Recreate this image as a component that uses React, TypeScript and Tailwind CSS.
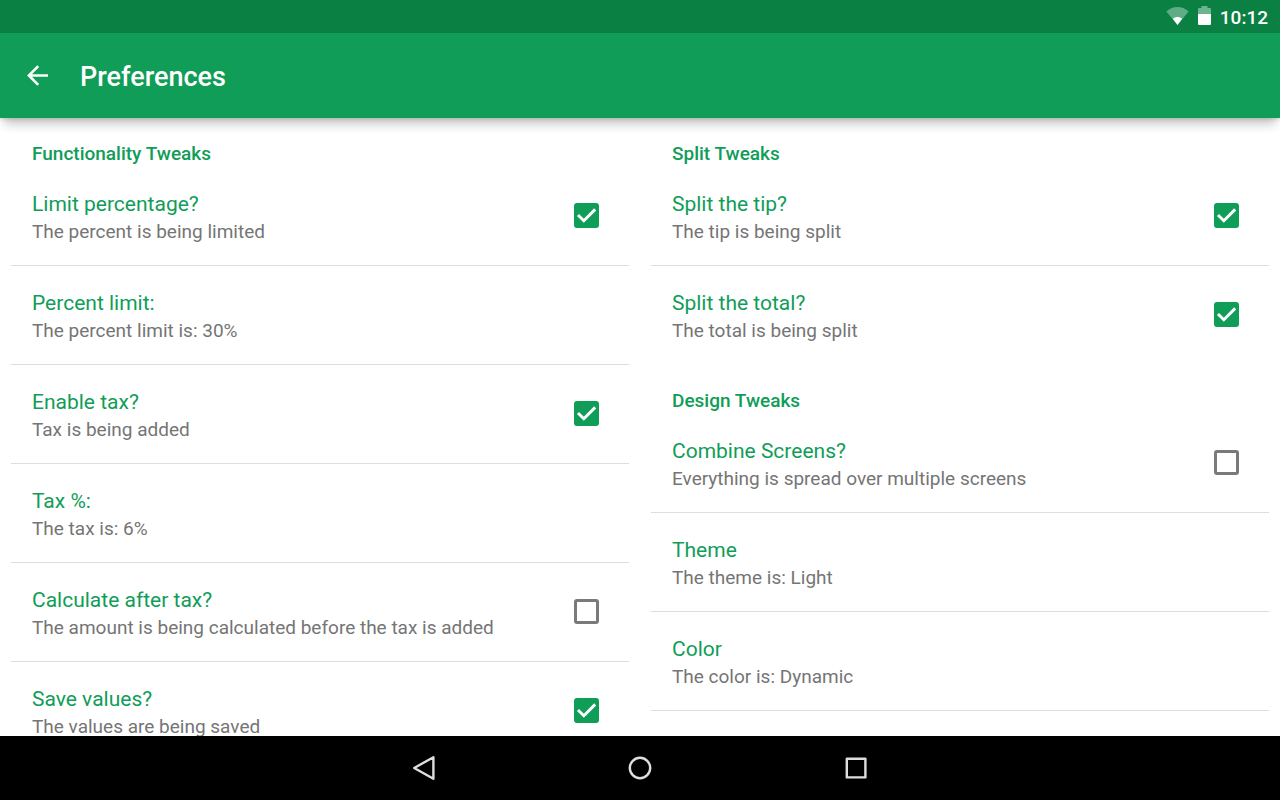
import { useState } from "react";

type Item = { title: string; summary: string; checked?: boolean };
type Section = { heading: string; items: Item[] };

const functionality: Section[] = [
  {
    heading: "Functionality Tweaks",
    items: [
      { title: "Limit percentage?", summary: "The percent is being limited", checked: true },
      { title: "Percent limit:", summary: "The percent limit is: 30%" },
      { title: "Enable tax?", summary: "Tax is being added", checked: true },
      { title: "Tax %:", summary: "The tax is: 6%" },
      {
        title: "Calculate after tax?",
        summary: "The amount is being calculated before the tax is added",
        checked: false,
      },
      { title: "Save values?", summary: "The values are being saved", checked: true },
    ],
  },
];

const appearance: Section[] = [
  {
    heading: "Split Tweaks",
    items: [
      { title: "Split the tip?", summary: "The tip is being split", checked: true },
      { title: "Split the total?", summary: "The total is being split", checked: true },
    ],
  },
  {
    heading: "Design Tweaks",
    items: [
      {
        title: "Combine Screens?",
        summary: "Everything is spread over multiple screens",
        checked: false,
      },
      { title: "Theme", summary: "The theme is: Light" },
      { title: "Color", summary: "The color is: Dynamic" },
    ],
  },
];

function ItemText({ title, summary }: { title: string; summary: string }) {
  return (
    <span className="flex min-w-0 flex-1 flex-col pt-[5px] text-left">
      <span className="truncate text-[21px] leading-7 text-[#0f9d58]">{title}</span>
      <span className="truncate text-[19px] leading-7 text-[#757575]">{summary}</span>
    </span>
  );
}

function CheckRow({ title, summary, initial }: { title: string; summary: string; initial: boolean }) {
  const [on, setOn] = useState(initial);
  return (
    <label className="flex w-full cursor-pointer items-center pt-[18px] pr-[30px] pb-[19px] pl-[21px]">
      <ItemText title={title} summary={summary} />
      <span className="grid size-[25px] shrink-0 place-items-center">
        <input
          type="checkbox"
          checked={on}
          onChange={(e) => setOn(e.target.checked)}
          className="col-start-1 row-start-1 size-[25px] appearance-none rounded-[3px] border-[3px] border-[#7a7a7a] checked:border-[#0f9d58] checked:bg-[#0f9d58]"
        />
        {on && (
          <svg viewBox="0 0 25 25" className="pointer-events-none col-start-1 row-start-1 size-[25px]" aria-hidden="true">
            <path d="M4 12 L9.8 17.7 L21.2 6.4" fill="none" stroke="#fff" strokeWidth="2.9" />
          </svg>
        )}
      </span>
    </label>
  );
}

function Column({ sections }: { sections: Section[] }) {
  return (
    <div className="min-h-0 overflow-y-auto px-[11px] [scrollbar-width:none]">
      {sections.map((section) => (
        <section key={section.heading}>
          <h2 className="px-[21px] pt-[22px] text-[19px] leading-[27px] font-medium text-[#0f9d58]">
            {section.heading}
          </h2>
          <ul>
            {section.items.map((item, i) => (
              <li
                key={item.title}
                className={
                  i === section.items.length - 1 && section !== sections[sections.length - 1]
                    ? "border-b border-transparent"
                    : "border-b border-[#dedede]"
                }
              >
                {item.checked === undefined ? (
                  <button type="button" className="flex w-full items-center px-[21px] pt-[18px] pb-[19px]">
                    <ItemText title={item.title} summary={item.summary} />
                  </button>
                ) : (
                  <CheckRow title={item.title} summary={item.summary} initial={item.checked} />
                )}
              </li>
            ))}
          </ul>
        </section>
      ))}
    </div>
  );
}

export default function App() {
  return (
    <div className="flex h-screen flex-col bg-white font-['Roboto',sans-serif]">
      <div className="relative z-20 flex h-[33px] shrink-0 items-start justify-end bg-[#0b8043] pt-[6px] pr-3 text-white">
        <svg viewBox="0 0 24 20" className="mr-2 h-5 w-6" aria-label="Wi-Fi">
          <path d="M0.4 5.4 C7 -0.5 16 -0.5 22.6 5.4 L11.5 19 Z" fill="#fff" fillOpacity="0.35" />
          <path d="M6.8 12.8 C9.6 10.4 13.4 10.4 16.2 12.8 L11.5 19 Z" fill="#fff" />
        </svg>
        <svg viewBox="0 0 13 19" className="mr-[9px] h-[19px] w-[13px]" aria-label="Battery">
          <path d="M0 8 V3 Q0 2 1 2 H3.5 V0 H9.5 V2 H12 Q13 2 13 3 V8 Z" fill="#fff" fillOpacity="0.4" />
          <path d="M0 8 H13 V18 Q13 19 12 19 H1 Q0 19 0 18 Z" fill="#fff" />
        </svg>
        <span className="text-[19px] leading-6 font-medium">10:12</span>
      </div>

      <header className="relative z-10 flex h-[85px] shrink-0 items-center bg-[#0f9d58] text-white shadow-[0_1px_4px_rgba(0,0,0,0.16),0_10px_10px_-4px_rgba(0,0,0,0.22)]">
        <button type="button" aria-label="Back" className="ml-[21px] flex size-8 items-center justify-center">
          <svg viewBox="0 0 32 32" className="size-8" aria-hidden="true">
            <path d="M27 15.5 H8 M17.2 6.2 L7.9 15.5 L17.2 24.8" fill="none" stroke="#fff" strokeWidth="2.6" />
          </svg>
        </button>
        <h1 className="ml-[27px] pt-[2px] text-[27px] leading-8 font-medium">Preferences</h1>
      </header>

      <main className="grid min-h-0 flex-1 grid-cols-2">
        <Column sections={functionality} />
        <Column sections={appearance} />
      </main>

      <nav className="flex h-16 shrink-0 items-center justify-center gap-[184px] bg-black" aria-label="System">
        <button type="button" aria-label="Back">
          <svg viewBox="0 0 32 32" className="size-8" aria-hidden="true">
            <path d="M25.4 5.2 V26.8 L6.2 16 Z" fill="none" stroke="#dedede" strokeWidth="2.4" strokeLinejoin="round" />
          </svg>
        </button>
        <button type="button" aria-label="Home">
          <svg viewBox="0 0 32 32" className="size-8" aria-hidden="true">
            <circle cx="16" cy="16" r="10.2" fill="none" stroke="#dedede" strokeWidth="2.4" />
          </svg>
        </button>
        <button type="button" aria-label="Recent apps">
          <svg viewBox="0 0 32 32" className="size-8" aria-hidden="true">
            <rect x="6.8" y="6.8" width="18.6" height="18.6" fill="none" stroke="#dedede" strokeWidth="2.4" strokeLinejoin="round" />
          </svg>
        </button>
      </nav>
    </div>
  );
}
